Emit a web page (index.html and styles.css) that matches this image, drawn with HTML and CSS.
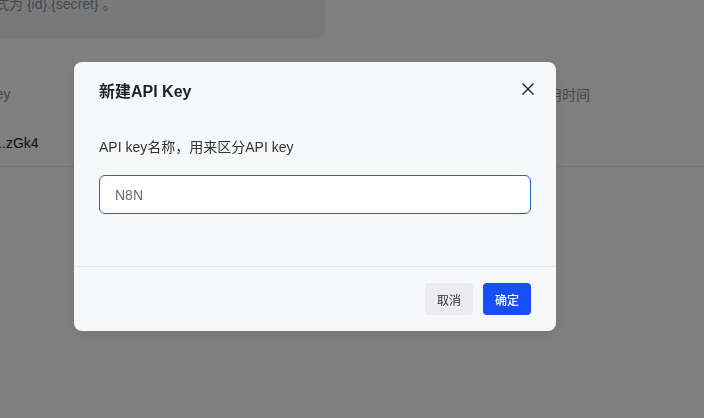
FILE: index.html
```html
<!DOCTYPE html>
<html>
  <head>
    <meta charset="UTF-8">
    <meta name="viewport" content="width=device-width, initial-scale=1.0">
    <title>API Key</title>
    <link rel="stylesheet" href="styles.css">
  </head>
  <body>
    <div class="page">
      <!-- tip box -->
      <div class="tip">式为 {id}.{secret} 。</div>

      <!-- key table -->
      <div class="table">
        <div class="row head">
          <div class="cell">API Key</div>
          <div class="cell"></div>
          <div class="cell">最后使用时间</div>
        </div>
        <div class="row">
          <div class="cell key">sk-a1...zGk4</div>
          <div class="cell"></div>
          <div class="cell"></div>
        </div>
      </div>
    </div>

    <!-- mask + dialog -->
    <div class="mask"></div>
    <div class="dialog">
      <div class="dialog-header">
        <div class="dialog-title">新建API Key</div>
        <button class="close" aria-label="close">
          <svg width="12" height="12" viewBox="0 0 12 12">
            <path d="M0.5 0.5 L11.5 11.5 M11.5 0.5 L0.5 11.5" stroke="#1d2129" stroke-width="1.3" fill="none"/>
          </svg>
        </button>
      </div>
      <div class="dialog-body">
        <div class="label">API key名称，用来区分API key</div>
        <input class="name-input" type="text" value="N8N">
      </div>
      <div class="dialog-footer">
        <button class="btn cancel">取消</button>
        <button class="btn ok">确定</button>
      </div>
    </div>
  </body>
</html>
```

FILE: styles.css
```css
body {
  margin: 0;
  background: #ffffff;
  font-family: "Liberation Sans", Arial, "Noto Sans CJK SC", sans-serif;
  font-size: 14px;
  color: #1d2129;
  overflow: hidden;
  height: 418px;
}

.page {
  width: 704px;
}

.tip {
  margin-top: -14px;
  margin-left: -5px;
  width: 330px;
  height: 45px;
  padding-top: 7px;
  line-height: 22px;
  background: #f2f3f5;
  border-radius: 0 0 8px 0;
  color: #86909c;
  white-space: nowrap;
}

.table {
  margin-top: 34px;
  margin-left: -40px;
}

.row {
  display: grid;
  grid-template-columns: 250px 296px 1fr;
  height: 51px;
  padding-top: 4px;
  box-sizing: border-box;
  align-items: center;
  border-bottom: 1px solid #e5e6eb;
}

.row.head {
  height: 44px;
  padding-top: 0;
  border-bottom: none;
  color: #86909c;
}

.cell {
  white-space: nowrap;
}

.mask {
  position: fixed;
  inset: 0;
  background: rgba(0, 0, 0, 0.5);
}

.dialog {
  position: fixed;
  left: 74px;
  top: 62px;
  width: 482px;
  background: #f7f8fa;
  border-radius: 8px;
  box-shadow: 0 4px 12px rgba(0, 0, 0, 0.08);
}

.dialog-header {
  display: flex;
  justify-content: space-between;
  align-items: flex-start;
  padding: 18px 20px 0 25px;
}

.dialog-title {
  font-size: 16px;
  font-weight: bold;
  line-height: 24px;
  color: #1d2129;
}

.close {
  margin-top: 1px;
  width: 16px;
  height: 16px;
  padding: 0;
  border: none;
  background: none;
  display: flex;
  align-items: center;
  justify-content: center;
  cursor: pointer;
}

.dialog-body {
  padding: 32px 25px 52px;
}

.label {
  line-height: 22px;
  color: #333333;
}

.name-input {
  display: block;
  margin-top: 17px;
  width: 100%;
  height: 39px;
  box-sizing: border-box;
  padding: 0 15px;
  border: 1px solid #2e5fcc;
  border-radius: 6px;
  background: #ffffff;
  font-family: "Liberation Sans", Arial, sans-serif;
  font-size: 14px;
  color: #6b6b6b;
  outline: none;
}

.dialog-footer {
  display: flex;
  justify-content: flex-end;
  gap: 10px;
  padding: 16px 25px;
  border-top: 1px solid #e8e9ed;
}

.btn {
  width: 48px;
  height: 32px;
  border: none;
  border-radius: 4px;
  font-family: "Noto Sans CJK SC", sans-serif;
  font-size: 12px;
  cursor: pointer;
}

.cancel {
  background: #ececf0;
  color: #333333;
}

.ok {
  background: #1650f5;
  color: #ffffff;
  font-weight: 500;
}
```
